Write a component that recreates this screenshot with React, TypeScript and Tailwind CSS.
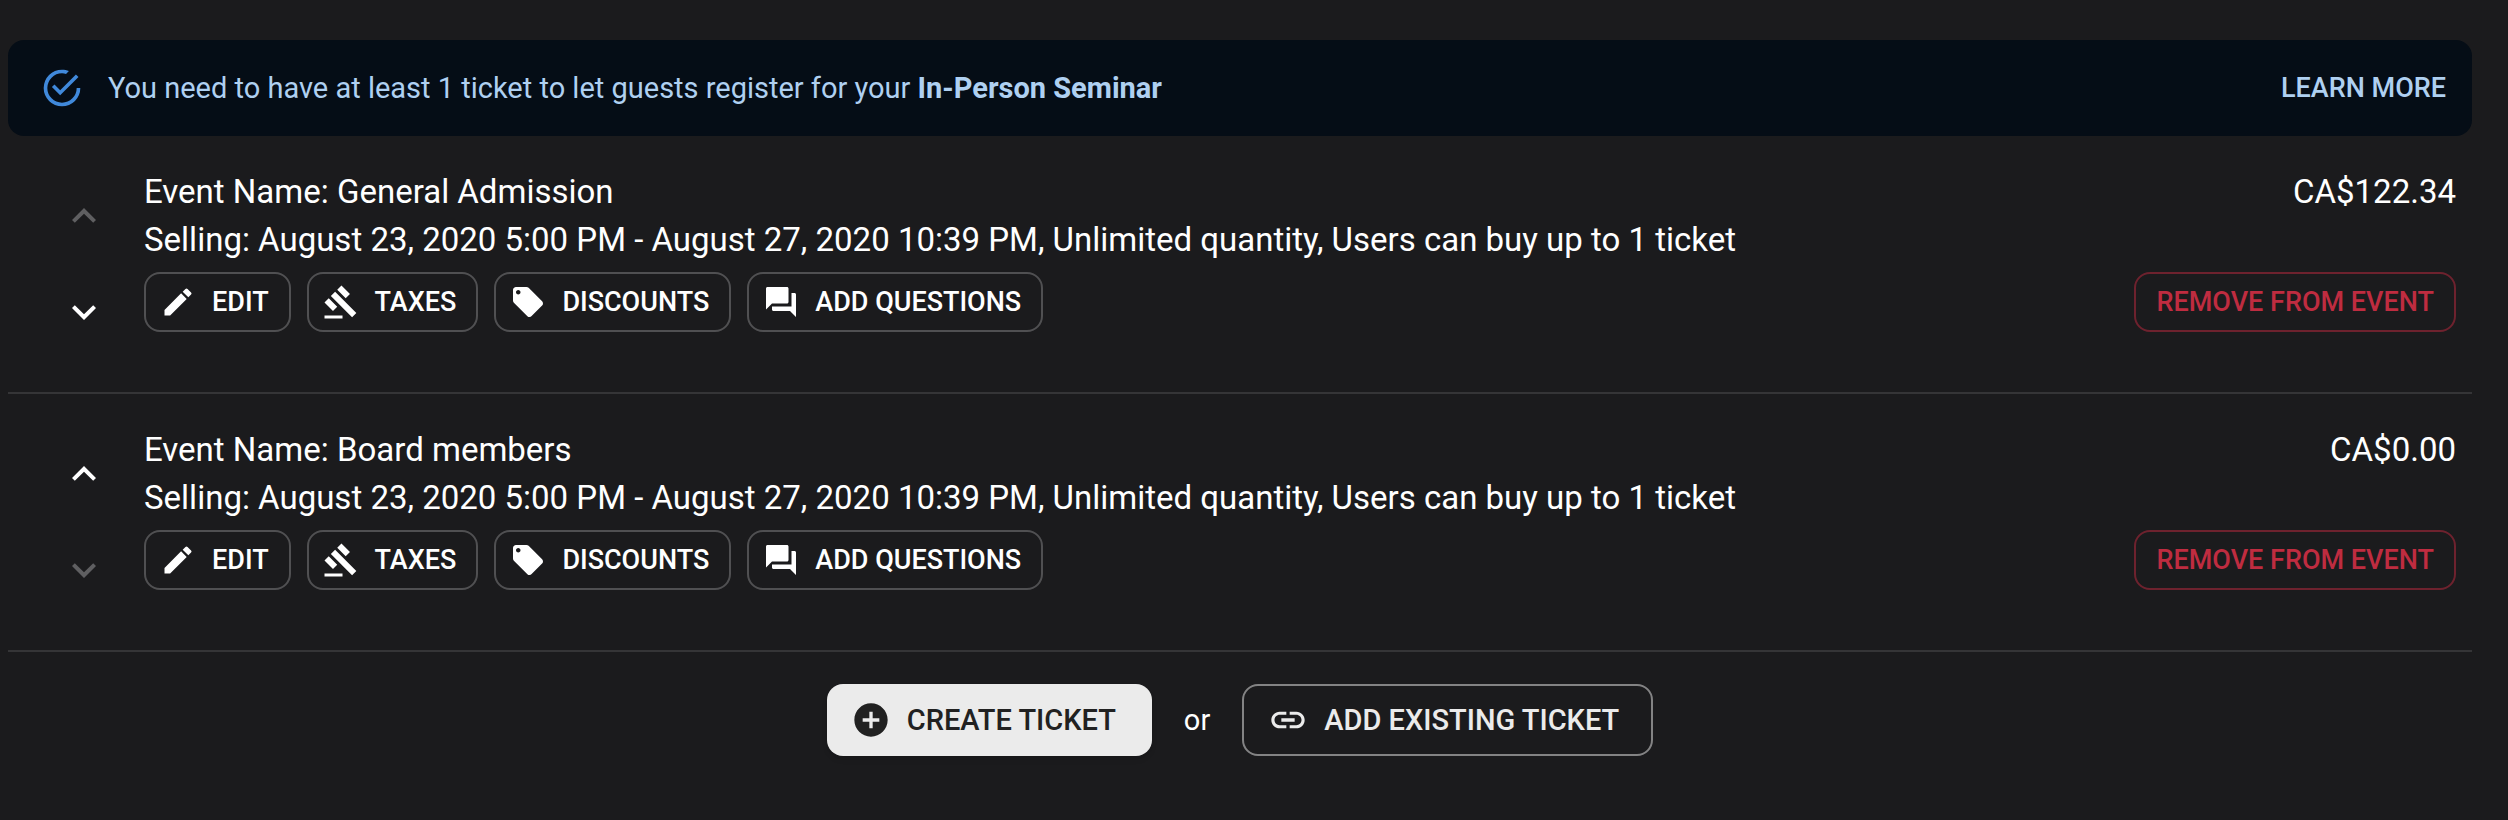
import React from 'react';
import {
    MdAddCircle,
    MdEdit,
    MdExpandLess,
    MdExpandMore,
    MdGavel,
    MdLink,
    MdLocalOffer,
    MdQuestionAnswer,
} from 'react-icons/md';

const tickets = [
    {
        id: 1,
        name: 'General Admission',
        selling: 'August 23, 2020 5:00 PM - August 27, 2020 10:39 PM',
        price: 'CA$122.34',
    },
    {
        id: 2,
        name: 'Board members',
        selling: 'August 23, 2020 5:00 PM - August 27, 2020 10:39 PM',
        price: 'CA$0.00',
    },
];

const actions = [
    { label: 'EDIT', icon: MdEdit },
    { label: 'TAXES', icon: MdGavel },
    { label: 'DISCOUNTS', icon: MdLocalOffer },
    { label: 'ADD QUESTIONS', icon: MdQuestionAnswer },
];

function CheckIcon() {
    return (
        <svg className="size-11 shrink-0 text-[#4089db]" viewBox="0 0 24 24" fill="currentColor" aria-hidden="true">
            <path d="M20,12A8,8 0 0,1 12,20A8,8 0 0,1 4,12A8,8 0 0,1 12,4C12.76,4 13.5,4.11 14.2,4.31L15.77,2.74C14.61,2.26 13.34,2 12,2A10,10 0 0,0 2,12A10,10 0 0,0 12,22A10,10 0 0,0 22,12M7.91,10.08L6.5,11.5L11,16L21,6L19.59,4.58L11,13.17L7.91,10.08Z" />
        </svg>
    );
}

export default function App() {
    return (
        <div className="min-h-screen bg-[#1b1b1d] pt-10 pr-9 pl-2 font-[Roboto,sans-serif] text-white">
            <div className="flex h-24 items-center gap-6 rounded-2xl bg-[#050d16] pr-4 pl-8 text-[#afd0f1]">
                <CheckIcon />
                <p className="flex-1 text-[29px] leading-10">
                    You need to have at least 1 ticket to let guests register for your{' '}
                    <strong className="font-bold">In-Person Seminar</strong>
                </p>
                <a href="#" className="px-[10px] text-[27px] leading-[48px] font-medium">LEARN MORE</a>
            </div>

            <ul>
                {tickets.map((ticket, index) => (
                    <li key={ticket.id} className="flex gap-3 border-b-2 border-[#353537] py-8 pr-4 pl-7">
                        <div className="flex flex-col">
                            <button
                                className="p-6 disabled:text-[#5f5f61]"
                                aria-label="Move up"
                                disabled={index === 0}
                            >
                                <MdExpandLess className="size-12" />
                            </button>
                            <button
                                className="p-6 disabled:text-[#5f5f61]"
                                aria-label="Move down"
                                disabled={index === tickets.length - 1}
                            >
                                <MdExpandMore className="size-12" />
                            </button>
                        </div>

                        <div className="flex-1 text-[33px] leading-[48px]">
                            <p>Event Name: {ticket.name}</p>
                            <p>Selling: {ticket.selling}, Unlimited quantity, Users can buy up to 1 ticket</p>
                            <div className="mt-2 flex gap-4">
                                {actions.map(({ label, icon: Icon }) => (
                                    <button
                                        key={label}
                                        className="flex h-[60px] items-center gap-4 rounded-2xl border-2 border-[#505052] pr-5 pl-[14px] text-[27px] font-medium"
                                    >
                                        <Icon className="size-9" />
                                        {label}
                                    </button>
                                ))}
                            </div>
                        </div>

                        <div className="flex flex-col items-end text-[33px] leading-[48px]">
                            <p>{ticket.price}</p>
                            <button className="mt-14 h-[60px] rounded-2xl border-2 border-[#6e222e] px-5 text-[27px] font-medium text-[#bf2c40]">
                                REMOVE FROM EVENT
                            </button>
                        </div>
                    </li>
                ))}
            </ul>

            <div className="flex items-center justify-center gap-8 py-8 text-[29px] leading-10">
                <button className="flex h-[72px] items-center gap-4 rounded-2xl bg-[#ebebeb] pr-9 pl-6 font-medium text-[#212121] shadow-md">
                    <MdAddCircle className="size-10" />
                    CREATE TICKET
                </button>
                <span>or</span>
                <button className="flex h-[72px] items-center gap-4 rounded-2xl border-2 border-[#838384] pr-8 pl-6 font-medium text-[#ebebeb]">
                    <MdLink className="size-10" />
                    ADD EXISTING TICKET
                </button>
            </div>
        </div>
    );
}
